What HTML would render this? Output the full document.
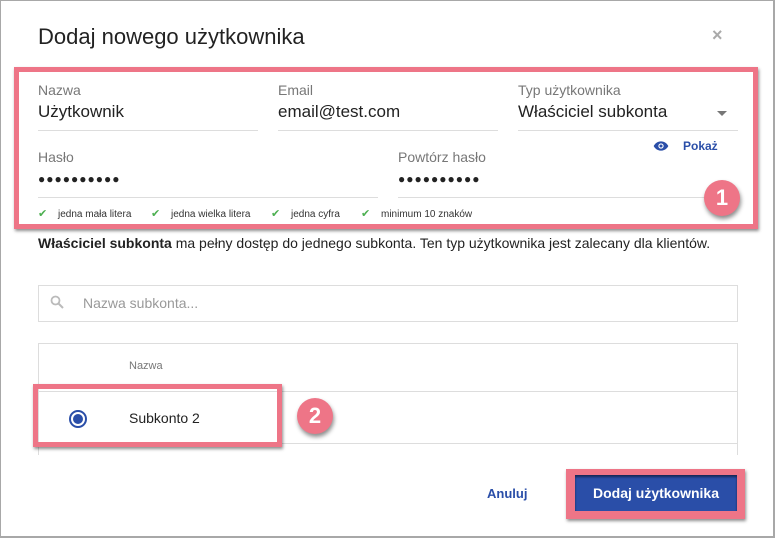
<!DOCTYPE html>
<html><head><meta charset="utf-8"><style>
*{box-sizing:border-box;margin:0;padding:0}
body{width:775px;height:538px;background:#fff;font-family:"Liberation Sans",sans-serif;position:relative;overflow:hidden;color:#222}
.a{position:absolute}
.frame{left:0;top:0;width:775px;height:538px;border:1px solid #a8a8a8;border-right-width:2px;border-bottom-width:2px}
.lbl{font-size:14px;color:#777}
.val{font-size:17px;color:#222}
.line{height:1px;background:#ddd}
.pink{border:5px solid #ee7587;box-shadow:1px 2px 3px rgba(0,0,0,.45)}
.badge{width:36px;height:36px;border-radius:50%;background:#ee7587;color:#fff;font-weight:bold;font-size:22px;text-align:center;line-height:36px;box-shadow:1px 3px 4px rgba(0,0,0,.45)}
.req{font-size:10px;color:#333;top:209px}
.chk{color:#4caf50;font-size:11px;top:207px}
.dots{font-size:12px;letter-spacing:1px;top:172px;color:#222}
</style></head><body>
<div class="a frame"></div>
<div class="a" style="left:38px;top:24px;font-size:22px;color:#222">Dodaj nowego użytkownika</div>
<div class="a" style="left:712px;top:25px;font-size:18px;color:#aaa;font-weight:bold">×</div>

<div class="a lbl" style="left:38px;top:82px">Nazwa</div>
<div class="a val" style="left:38px;top:102px">Użytkownik</div>
<div class="a line" style="left:38px;top:130px;width:220px"></div>
<div class="a lbl" style="left:278px;top:82px">Email</div>
<div class="a val" style="left:278px;top:102px">email@test.com</div>
<div class="a line" style="left:278px;top:130px;width:220px"></div>
<div class="a lbl" style="left:518px;top:82px">Typ użytkownika</div>
<div class="a val" style="left:518px;top:102px">Właściciel subkonta</div>
<div class="a" style="left:717px;top:111px;width:0;height:0;border-left:5px solid transparent;border-right:5px solid transparent;border-top:5px solid #777"></div>
<div class="a line" style="left:518px;top:130px;width:220px"></div>
<svg class="a" style="left:653px;top:140px" width="16" height="12" viewBox="0 0 24 16"><path d="M12 1C7 1 3 4 1 8c2 4 6 7 11 7s9-3 11-7c-2-4-6-7-11-7z" fill="#2a4ea8"/><circle cx="12" cy="8" r="4" fill="#fff"/><circle cx="12" cy="8" r="2.3" fill="#2a4ea8"/></svg>
<div class="a" style="left:683px;top:139px;font-size:12px;font-weight:bold;color:#2a4ea8">Pokaż</div>

<div class="a lbl" style="left:38px;top:149px">Hasło</div>
<div class="a dots" style="left:38px">●●●●●●●●●●</div>
<div class="a line" style="left:38px;top:197px;width:340px"></div>
<div class="a lbl" style="left:398px;top:149px">Powtórz hasło</div>
<div class="a dots" style="left:398px">●●●●●●●●●●</div>
<div class="a line" style="left:398px;top:197px;width:340px"></div>

<div class="a chk" style="left:38px">✔</div><div class="a req" style="left:58px">jedna mała litera</div>
<div class="a chk" style="left:151px">✔</div><div class="a req" style="left:171px">jedna wielka litera</div>
<div class="a chk" style="left:271px">✔</div><div class="a req" style="left:291px">jedna cyfra</div>
<div class="a chk" style="left:361px">✔</div><div class="a req" style="left:381px">minimum 10 znaków</div>

<div class="a pink" style="left:14px;top:67px;width:744px;height:162px"></div>
<div class="a badge" style="left:704px;top:180px">1</div>

<div class="a" style="left:38px;top:235px;font-size:14px;color:#222;white-space:nowrap"><b>Właściciel subkonta</b> ma pełny dostęp do jednego subkonta. Ten typ użytkownika jest zalecany dla klientów.</div>

<div class="a" style="left:38px;top:285px;width:700px;height:37px;border:1px solid #ddd"></div>
<svg class="a" style="left:50px;top:295px" width="14" height="14" viewBox="0 0 14 14"><circle cx="5.5" cy="5.5" r="4" stroke="#bbb" stroke-width="1.8" fill="none"/><path d="M8.5 8.5L13 13" stroke="#bbb" stroke-width="2"/></svg>
<div class="a" style="left:83px;top:295px;font-size:14px;color:#999">Nazwa subkonta...</div>

<div class="a" style="left:38px;top:343px;width:700px;height:112px;border:1px solid #ddd;border-bottom:none"></div>
<div class="a" style="left:129px;top:360px;font-size:11px;color:#777">Nazwa</div>
<div class="a line" style="left:38px;top:391px;width:700px"></div>
<div class="a line" style="left:38px;top:443px;width:700px"></div>
<div class="a" style="left:69px;top:410px;width:18px;height:18px;border-radius:50%;border:2px solid #2a4ea8"></div>
<div class="a" style="left:73px;top:414px;width:10px;height:10px;border-radius:50%;background:#2a4ea8"></div>
<div class="a" style="left:129px;top:410px;font-size:14px;color:#222">Subkonto 2</div>
<div class="a pink" style="left:33px;top:384px;width:249px;height:63px"></div>
<div class="a badge" style="left:297px;top:398px">2</div>

<div class="a" style="left:487px;top:486px;font-size:13px;font-weight:bold;color:#2a4ea8">Anuluj</div>
<div class="a" style="left:566px;top:469px;width:179px;height:50px;background:#ee7587;box-shadow:1px 2px 3px rgba(0,0,0,.45)"></div>
<div class="a" style="left:575px;top:475px;width:162px;height:36px;background:#2a4ea8;color:#fff;font-size:14px;font-weight:bold;text-align:center;line-height:36px;box-shadow:inset 0 2px 2px rgba(0,0,0,.5)">Dodaj użytkownika</div>
</body></html>
